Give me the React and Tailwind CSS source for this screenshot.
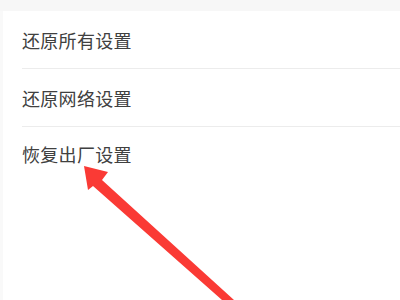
export default function App() {
  const items = ["还原所有设置", "还原网络设置", "恢复出厂设置"];
  return (
    <div className="relative w-[400px] h-[300px] overflow-hidden bg-[#f9f9f9]" style={{ fontFamily: '"Noto Sans CJK SC", "Noto Sans", sans-serif' }}>
      <div className="h-[11px] bg-[#f7f7f7]" />
      <div className="ml-[3px] h-[289px] bg-white pl-[19px]">
        {items.map((t, i) => (
          <div
            key={t}
            className={`flex items-center pt-[2px] text-[18px] tracking-[0.3px] text-[#404040] ${i < 2 ? "h-[58px] border-b border-[#ececec]" : "h-[52px]"}`}
          >
            {t}
          </div>
        ))}
      </div>
      <svg className="absolute left-0 top-0" width="400" height="300" viewBox="0 0 400 300">
        <polygon points="84,166 108,172 102,180 234,300 222,300 93,186 88,190" fill="#fa3a35" />
      </svg>
    </div>
  );
}
